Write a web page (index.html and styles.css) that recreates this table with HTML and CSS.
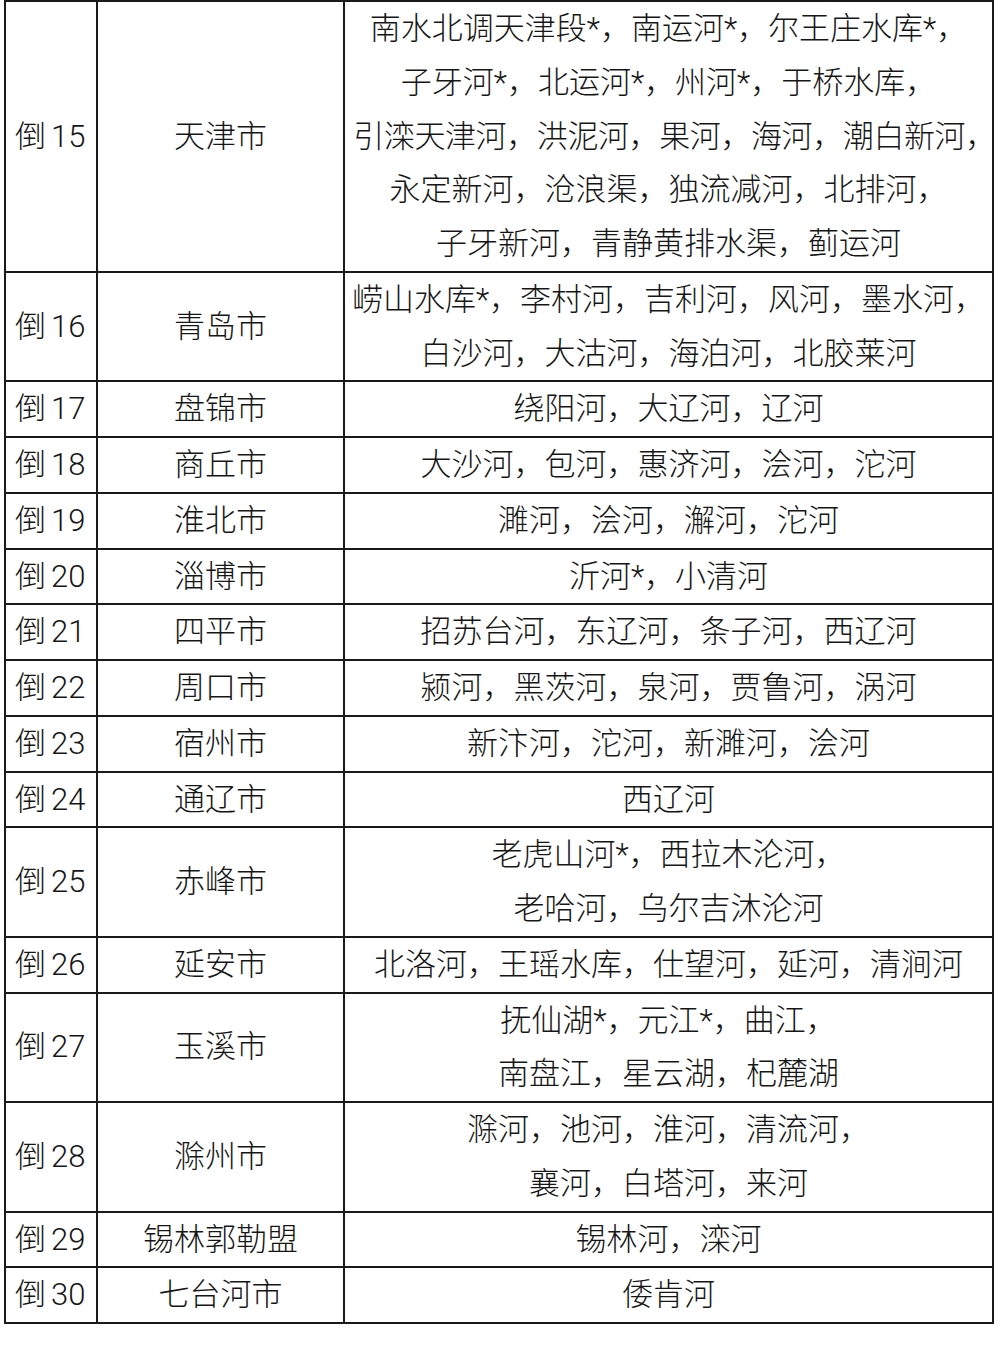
FILE: index.html
```html
<!DOCTYPE html>
<html lang="zh-CN">
<head>
<meta charset="utf-8">
<title>城市水体排名</title>
<link rel="stylesheet" href="styles.css">
</head>
<body>
<table class="rank">
  <colgroup>
    <col class="c-rank">
    <col class="c-city">
    <col class="c-water">
  </colgroup>
  <tbody>
    <tr><td class="rk">倒<span class="num">15</span></td><td class="city">天津市</td><td class="water"><div class="lines"><span>南水北调天津段*，南运河*，尔王庄水库*，</span><span>子牙河*，北运河*，州河*，于桥水库，</span><span class="tight">引滦天津河，洪泥河，果河，海河，潮白新河，</span><span>永定新河，沧浪渠，独流减河，北排河，</span><span>子牙新河，青静黄排水渠，蓟运河</span></div></td></tr>
    <tr><td class="rk">倒<span class="num">16</span></td><td class="city">青岛市</td><td class="water"><div class="lines"><span>崂山水库*，李村河，吉利河，风河，墨水河，</span><span>白沙河，大沽河，海泊河，北胶莱河</span></div></td></tr>
    <tr><td class="rk">倒<span class="num">17</span></td><td class="city">盘锦市</td><td class="water"><div class="lines"><span>绕阳河，大辽河，辽河</span></div></td></tr>
    <tr><td class="rk">倒<span class="num">18</span></td><td class="city">商丘市</td><td class="water"><div class="lines"><span>大沙河，包河，惠济河，浍河，沱河</span></div></td></tr>
    <tr><td class="rk">倒<span class="num">19</span></td><td class="city">淮北市</td><td class="water"><div class="lines"><span>濉河，浍河，澥河，沱河</span></div></td></tr>
    <tr><td class="rk">倒<span class="num">20</span></td><td class="city">淄博市</td><td class="water"><div class="lines"><span>沂河*，小清河</span></div></td></tr>
    <tr><td class="rk">倒<span class="num">21</span></td><td class="city">四平市</td><td class="water"><div class="lines"><span>招苏台河，东辽河，条子河，西辽河</span></div></td></tr>
    <tr><td class="rk">倒<span class="num">22</span></td><td class="city">周口市</td><td class="water"><div class="lines"><span>颍河，黑茨河，泉河，贾鲁河，涡河</span></div></td></tr>
    <tr><td class="rk">倒<span class="num">23</span></td><td class="city">宿州市</td><td class="water"><div class="lines"><span>新汴河，沱河，新濉河，浍河</span></div></td></tr>
    <tr><td class="rk">倒<span class="num">24</span></td><td class="city">通辽市</td><td class="water"><div class="lines"><span>西辽河</span></div></td></tr>
    <tr><td class="rk">倒<span class="num">25</span></td><td class="city">赤峰市</td><td class="water"><div class="lines"><span>老虎山河*，西拉木沦河，</span><span>老哈河，乌尔吉沐沦河</span></div></td></tr>
    <tr><td class="rk">倒<span class="num">26</span></td><td class="city">延安市</td><td class="water"><div class="lines"><span>北洛河，王瑶水库，仕望河，延河，清涧河</span></div></td></tr>
    <tr><td class="rk">倒<span class="num">27</span></td><td class="city">玉溪市</td><td class="water"><div class="lines"><span>抚仙湖*，元江*，曲江，</span><span>南盘江，星云湖，杞麓湖</span></div></td></tr>
    <tr><td class="rk">倒<span class="num">28</span></td><td class="city">滁州市</td><td class="water"><div class="lines"><span>滁河，池河，淮河，清流河，</span><span>襄河，白塔河，来河</span></div></td></tr>
    <tr><td class="rk">倒<span class="num">29</span></td><td class="city">锡林郭勒盟</td><td class="water"><div class="lines"><span>锡林河，滦河</span></div></td></tr>
    <tr><td class="rk">倒<span class="num">30</span></td><td class="city">七台河市</td><td class="water"><div class="lines"><span>倭肯河</span></div></td></tr>
  </tbody>
</table>
</body>
</html>
```
FILE: styles.css
```css
html, body {
  margin: 0;
  padding: 0;
  background: #ffffff;
}

body {
  padding: 0 0 0 4px;
  font-family: "Roboto", "Noto Sans CJK SC", "Noto Sans", sans-serif;
  font-weight: 300;
  font-size: 31px;
  color: #161616;
}

.rank {
  border-collapse: collapse;
  table-layout: fixed;
  width: 988px;
}

.c-rank { width: 92px; }
.c-city { width: 247px; }
.c-water { width: 649px; }

.rank td {
  border: 2px solid #1a1a1a;
  padding: 0;
  line-height: 53.75px;
  vertical-align: middle;
  white-space: nowrap;
}

.rk {
  text-align: left;
  padding-left: 9px !important;
}

.num {
  margin-left: 5px;
}

.city {
  text-align: center;
}

.lines {
  display: flex;
  flex-direction: column;
  align-items: center;
}

.lines span {
  display: block;
  white-space: nowrap;
}

.lines .tight {
  letter-spacing: -0.4px;
  margin-left: 12px;
}
```
